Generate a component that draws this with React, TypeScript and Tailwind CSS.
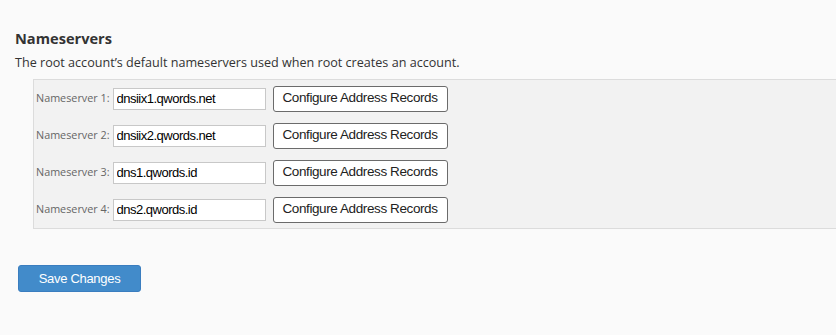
const servers = [
  "dnsiix1.qwords.net",
  "dnsiix2.qwords.net",
  "dns1.qwords.id",
  "dns2.qwords.id",
];

export default function App() {
  return (
    <div className="min-h-[335px] w-full bg-[#fafafa] pt-[28px] text-[#333]">
      <div className="pl-[15px]">
        <h3 className="font-['Open_Sans',sans-serif] text-[14.6px] font-bold leading-[20px] text-[#333]">
          Nameservers
        </h3>
        <p className="mt-[6px] font-['Open_Sans',sans-serif] text-[12.6px] leading-[18px] text-[#333]">
          The root account’s default nameservers used when root creates an account.
        </p>
      </div>

      <div className="ml-[33px] mt-[7px] border-y border-l border-[#dcdcdc] bg-[#f2f2f2] pl-[2px]">
        {servers.map((s, i) => (
          <div key={s} className="flex h-[37px] items-center">
            <label className="font-['Open_Sans',sans-serif] text-[10.8px] text-[#666]">
              Nameserver {i + 1}:
            </label>
            <input
              readOnly
              value={s}
              className="ml-[3px] h-[22px] w-[153px] border border-[#c8c8c8] bg-white px-[3px] font-['Liberation_Sans',Arial,sans-serif] text-[13px] tracking-[-0.5px] text-black outline-none"
            />
            <button className="ml-[7px] h-[26px] w-[175px] rounded-[3px] border border-[#6b6b6b] bg-white font-['Liberation_Sans',Arial,sans-serif] text-[13.5px] tracking-[-0.4px] text-[#222]">
              Configure Address Records
            </button>
          </div>
        ))}
      </div>

      <div className="pl-[18px] pt-[36px]">
        <button className="h-[27px] w-[123px] rounded-[3px] border border-[#3a7dbf] bg-[#428bca] font-['Liberation_Sans',Arial,sans-serif] text-[13px] tracking-[-0.3px] text-white">
          Save Changes
        </button>
      </div>
    </div>
  );
}
